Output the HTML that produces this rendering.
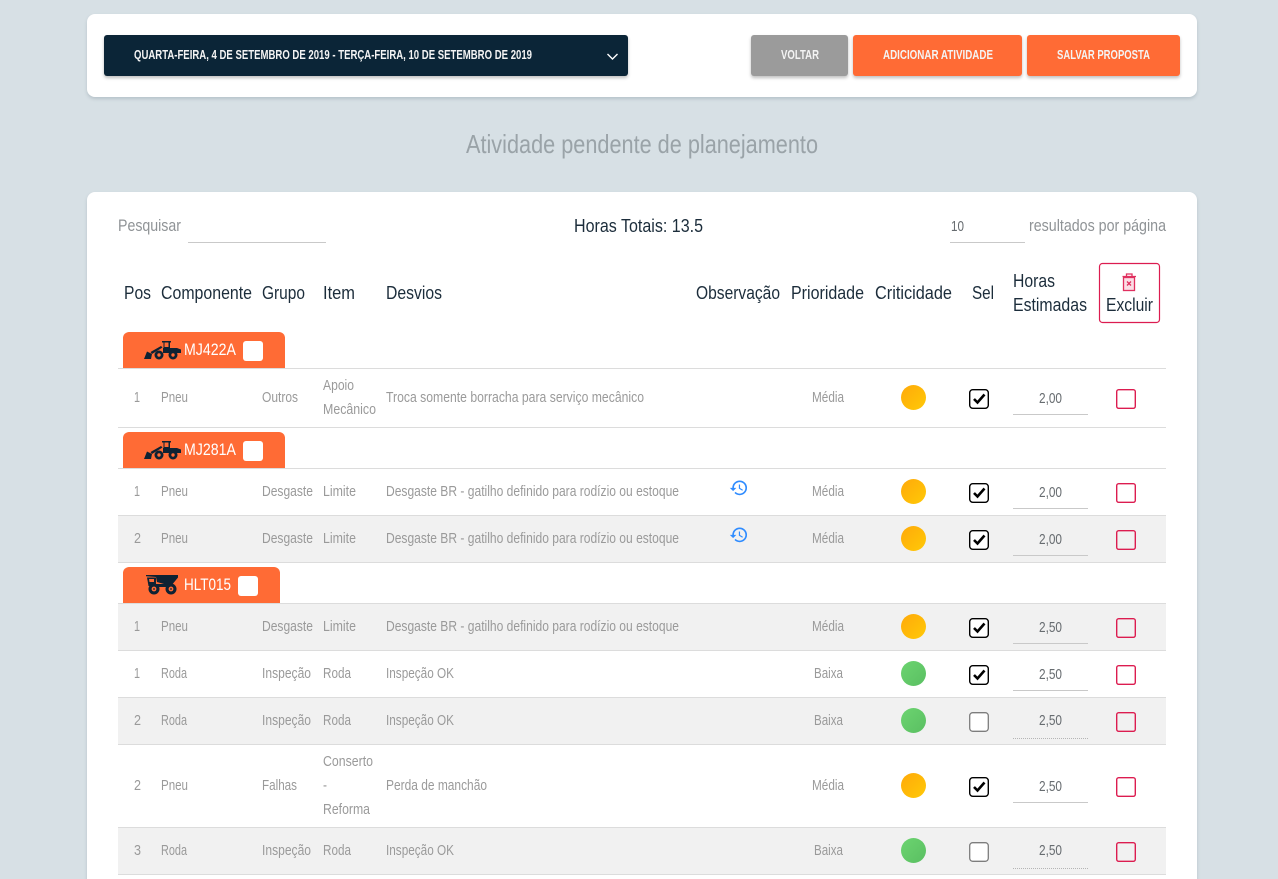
<!DOCTYPE html>
<html lang="pt"><head><meta charset="utf-8"><title>Atividade pendente de planejamento</title>
<style>
html,body{margin:0;padding:0;width:1278px;height:879px;overflow:hidden;background:#d7e0e5;font-family:"Liberation Sans",sans-serif}
#w{position:relative;width:1278px;height:879px;overflow:hidden}
.p{position:absolute;background:#fff;border-radius:8px;left:87px;width:1110px;box-shadow:0 2px 3px rgba(90,110,125,.25)}
.b{position:absolute;top:35px;height:41px;border-radius:3px;box-shadow:0 2px 3px rgba(0,0,0,.25)}
svg{position:absolute;left:0;top:0}
text{font-family:"Liberation Sans",sans-serif}
.c{font-size:15px;fill:#9a9a9a}
.h{font-size:18px;fill:#1c2d3b}
.g{font-size:17px;fill:#8f9396}
.n{font-size:15px;fill:#676c70}
.w{font-size:13px;font-weight:bold;fill:#f4f4f4}
.m{font-size:17px;fill:#fff}
.k{fill:#fff;stroke:#000;stroke-width:1.4}
.u{fill:none;stroke:#7d7d7d;stroke-width:1.3}
.r{fill:none;stroke:#dc1c50;stroke-width:1.4}
.ck{fill:none;stroke:#000;stroke-width:2.6}
.l{stroke:#dcdcdc;stroke-width:1}
.d{stroke:#c9c9c9;stroke-width:1}
.dd{stroke:#b5b5b5;stroke-width:1;stroke-dasharray:1 1}
</style></head><body><div id="w">
<div class="p" style="top:14px;height:83px"></div>
<div class="p" style="top:192px;height:700px"></div>
<div class="b" style="left:104px;width:524px;background:#0b2537"></div>
<div class="b" style="left:751px;width:97px;background:#9b9b9b"></div>
<div class="b" style="left:853px;width:169px;background:#ff6b35"></div>
<div class="b" style="left:1027px;width:153px;background:#ff6b35"></div>
<svg width="1278" height="879" viewBox="0 0 1278 879" xmlns="http://www.w3.org/2000/svg">
<defs>
<linearGradient id="o" x1="0" y1="0" x2="1" y2="1"><stop offset="0" stop-color="#ffa90a"/><stop offset="1" stop-color="#ffc907"/></linearGradient>
<linearGradient id="gr" x1="0" y1="0" x2="1" y2="1"><stop offset="0" stop-color="#6cd470"/><stop offset="1" stop-color="#5abf62"/></linearGradient>
<path id="hist" fill="#2f8cff" d="M13 3a9 9 0 0 0-9 9H1l3.89 3.89.07.14L9 12H6c0-3.87 3.13-7 7-7s7 3.13 7 7-3.13 7-7 7c-1.93 0-3.68-.79-4.94-2.06l-1.42 1.42A8.954 8.954 0 0 0 13 21a9 9 0 0 0 0-18zm-1 5v5l4.28 2.54.72-1.21-3.5-2.08V8H12z"/>
<g id="loader" fill="#0e2233">
<path d="M0 18 L3 10.500 L8 13 L7 18 Z"/>
<path d="M6.500 11 L17 5 L18.500 6.500 L8 13 Z"/>
<path d="M18 0 H27 V1.500 H26 V7 H33 L37 8.500 V12 H19 V7 H19.500 V1.500 H18 Z"/>
<rect x="20.500" y="1.500" width="4" height="4.500" fill="#ff6b35"/>
<circle cx="15" cy="14" r="4.500"/><circle cx="29" cy="14" r="4.500"/>
<circle cx="15" cy="14" r="1.700" fill="#ff6b35"/><circle cx="29" cy="14" r="1.700" fill="#ff6b35"/>
</g>
<g id="truck" fill="#0e2233">
<path d="M0 0 L32 0 L32 2.500 L25 11 L11 7 L10 2 L0 1.200 Z"/>
<path d="M1 2.500 H10 V11 H2.500 Z"/>
<rect x="8" y="9" width="17" height="3"/>
<path d="M3 4 H8 V7 H3.500 Z" fill="#ff6b35"/>
<circle cx="8" cy="14" r="5.500"/><circle cx="25" cy="14" r="5.500"/>
<circle cx="8" cy="14" r="2.400" fill="#ff6b35"/><circle cx="25" cy="14" r="2.400" fill="#ff6b35"/>
<circle cx="8" cy="14" r=".9"/><circle cx="25" cy="14" r=".9"/>
</g>
</defs>

<!-- top bar -->
<text class="w" x="134" y="59" textLength="398" lengthAdjust="spacingAndGlyphs">QUARTA-FEIRA, 4 DE SETEMBRO DE 2019 - TERÇA-FEIRA, 10 DE SETEMBRO DE 2019</text>
<path d="M607.500 54 L612.500 59 L617.500 54" fill="none" stroke="#fff" stroke-width="1.400"/>
<text class="w" x="781" y="59" textLength="38" lengthAdjust="spacingAndGlyphs">VOLTAR</text>
<text class="w" x="883" y="59" textLength="110" lengthAdjust="spacingAndGlyphs">ADICIONAR ATIVIDADE</text>
<text class="w" x="1057" y="59" textLength="93" lengthAdjust="spacingAndGlyphs">SALVAR PROPOSTA</text>

<text x="466" y="153" font-size="26" fill="#9aa3a8" textLength="352" lengthAdjust="spacingAndGlyphs">Atividade pendente de planejamento</text>

<!-- toolbar -->
<text class="g" x="118" y="231" textLength="63" lengthAdjust="spacingAndGlyphs">Pesquisar</text>
<line x1="188" y1="242.500" x2="326" y2="242.500" class="d"/>
<text class="h" x="574" y="232" textLength="129" lengthAdjust="spacingAndGlyphs">Horas Totais: 13.5</text>
<text class="n" x="951" y="231" textLength="13" lengthAdjust="spacingAndGlyphs">10</text>
<line x1="950" y1="242.500" x2="1025" y2="242.500" class="d"/>
<text class="g" x="1029" y="231" textLength="137" lengthAdjust="spacingAndGlyphs">resultados por página</text>

<!-- header -->
<text class="h" x="124" y="299" textLength="27" lengthAdjust="spacingAndGlyphs">Pos</text>
<text class="h" x="161" y="299" textLength="91" lengthAdjust="spacingAndGlyphs">Componente</text>
<text class="h" x="262" y="299" textLength="43" lengthAdjust="spacingAndGlyphs">Grupo</text>
<text class="h" x="323" y="299" textLength="32" lengthAdjust="spacingAndGlyphs">Item</text>
<text class="h" x="386" y="299" textLength="56" lengthAdjust="spacingAndGlyphs">Desvios</text>
<text class="h" x="696" y="299" textLength="84" lengthAdjust="spacingAndGlyphs">Observação</text>
<text class="h" x="791" y="299" textLength="73" lengthAdjust="spacingAndGlyphs">Prioridade</text>
<text class="h" x="875" y="299" textLength="77" lengthAdjust="spacingAndGlyphs">Criticidade</text>
<text class="h" x="972" y="299" textLength="22" lengthAdjust="spacingAndGlyphs">Sel</text>
<text class="h" x="1013" y="287" textLength="42" lengthAdjust="spacingAndGlyphs">Horas</text>
<text class="h" x="1013" y="311" textLength="74" lengthAdjust="spacingAndGlyphs">Estimadas</text>
<rect x="1099.500" y="263.500" width="60" height="59" rx="3" fill="#fff" stroke="#dc1c50" stroke-width="1.200"/>
<text class="h" x="1106" y="311" textLength="47" lengthAdjust="spacingAndGlyphs">Excluir</text>
<g fill="none" stroke="#e0305f" stroke-width="1.300">
<path d="M1122.500 276.500 H1136 M1126.500 276.500 V274 H1132 V276.500"/>
<rect x="1123.500" y="277.500" width="11" height="13" fill="#fbdde5"/>
<path d="M1127 281.500 L1131 285.500 M1131 281.500 L1127 285.500"/>
</g>

<!-- row backgrounds -->
<g fill="#f1f1f1">
<rect x="118" y="516" width="1048" height="46"/>
<rect x="118" y="604" width="1048" height="46"/>
<rect x="118" y="698" width="1048" height="46"/>
<rect x="118" y="828" width="1048" height="46"/>
</g>
<g class="l">
<line x1="118" x2="1166" y1="368.500" y2="368.500"/>
<line x1="118" x2="1166" y1="427.500" y2="427.500"/>
<line x1="118" x2="1166" y1="468.500" y2="468.500"/>
<line x1="118" x2="1166" y1="515.500" y2="515.500"/>
<line x1="118" x2="1166" y1="562.500" y2="562.500"/>
<line x1="118" x2="1166" y1="603.500" y2="603.500"/>
<line x1="118" x2="1166" y1="650.500" y2="650.500"/>
<line x1="118" x2="1166" y1="697.500" y2="697.500"/>
<line x1="118" x2="1166" y1="744.500" y2="744.500"/>
<line x1="118" x2="1166" y1="827.500" y2="827.500"/>
<line x1="118" x2="1166" y1="874.500" y2="874.500"/>
</g>

<!-- group tabs -->
<path d="M123 368 V338 a6 6 0 0 1 6-6 H279 a6 6 0 0 1 6 6 V368 Z" fill="#ff6b35"/>
<use href="#loader" x="144" y="341"/>
<text class="m" x="184" y="355" textLength="52" lengthAdjust="spacingAndGlyphs">MJ422A</text>
<rect x="243" y="341" width="20" height="20" rx="3" fill="#fff"/>

<path d="M123 468 V438 a6 6 0 0 1 6-6 H279 a6 6 0 0 1 6 6 V468 Z" fill="#ff6b35"/>
<use href="#loader" x="144" y="441"/>
<text class="m" x="184" y="455" textLength="52" lengthAdjust="spacingAndGlyphs">MJ281A</text>
<rect x="243" y="441" width="20" height="20" rx="3" fill="#fff"/>

<path d="M123 603 V573 a6 6 0 0 1 6-6 H274 a6 6 0 0 1 6 6 V603 Z" fill="#ff6b35"/>
<use href="#truck" x="146" y="575"/>
<text class="m" x="184" y="590" textLength="47" lengthAdjust="spacingAndGlyphs">HLT015</text>
<rect x="238" y="576" width="20" height="20" rx="3" fill="#fff"/>

<!-- row 1 -->
<g class="c">
<text x="134" y="402" textLength="6" lengthAdjust="spacingAndGlyphs">1</text>
<text x="161" y="402" textLength="27" lengthAdjust="spacingAndGlyphs">Pneu</text>
<text x="262" y="402" textLength="36" lengthAdjust="spacingAndGlyphs">Outros</text>
<text x="323" y="390" textLength="31" lengthAdjust="spacingAndGlyphs">Apoio</text>
<text x="323" y="414" textLength="53" lengthAdjust="spacingAndGlyphs">Mecânico</text>
<text x="386" y="402" textLength="258" lengthAdjust="spacingAndGlyphs">Troca somente borracha para serviço mecânico</text>
<text x="812" y="402" textLength="32" lengthAdjust="spacingAndGlyphs">Média</text>
</g>
<circle cx="913.500" cy="397.500" r="12.500" fill="url(#o)"/>
<rect class="k" x="969.700" y="389.700" width="18.600" height="18.600" rx="3"/><path class="ck" d="M974 399 L977.500 402.500 L984.500 394.500"/>
<text class="n" x="1039" y="403" textLength="23" lengthAdjust="spacingAndGlyphs">2,00</text>
<line x1="1013" x2="1088" y1="414.500" y2="414.500" class="d"/>
<rect class="r" x="1116.700" y="389.700" width="18.600" height="18.600" rx="2"/>

<!-- MJ281A rows -->
<g class="c">
<text x="134" y="496" textLength="6" lengthAdjust="spacingAndGlyphs">1</text>
<text x="161" y="496" textLength="27" lengthAdjust="spacingAndGlyphs">Pneu</text>
<text x="262" y="496" textLength="51" lengthAdjust="spacingAndGlyphs">Desgaste</text>
<text x="323" y="496" textLength="33" lengthAdjust="spacingAndGlyphs">Limite</text>
<text x="386" y="496" textLength="293" lengthAdjust="spacingAndGlyphs">Desgaste BR - gatilho definido para rodízio ou estoque</text>
<text x="812" y="496" textLength="32" lengthAdjust="spacingAndGlyphs">Média</text>
</g>
<use href="#hist" transform="translate(729 478) scale(.82)"/>
<circle cx="913.500" cy="491.500" r="12.500" fill="url(#o)"/>
<rect class="k" x="969.700" y="483.700" width="18.600" height="18.600" rx="3"/><path class="ck" d="M974 493 L977.500 496.500 L984.500 488.500"/>
<text class="n" x="1039" y="497" textLength="23" lengthAdjust="spacingAndGlyphs">2,00</text>
<line x1="1013" x2="1088" y1="508.500" y2="508.500" class="d"/>
<rect class="r" x="1116.700" y="483.700" width="18.600" height="18.600" rx="2"/>

<g class="c">
<text x="134" y="543" textLength="7" lengthAdjust="spacingAndGlyphs">2</text>
<text x="161" y="543" textLength="27" lengthAdjust="spacingAndGlyphs">Pneu</text>
<text x="262" y="543" textLength="51" lengthAdjust="spacingAndGlyphs">Desgaste</text>
<text x="323" y="543" textLength="33" lengthAdjust="spacingAndGlyphs">Limite</text>
<text x="386" y="543" textLength="293" lengthAdjust="spacingAndGlyphs">Desgaste BR - gatilho definido para rodízio ou estoque</text>
<text x="812" y="543" textLength="32" lengthAdjust="spacingAndGlyphs">Média</text>
</g>
<use href="#hist" transform="translate(729 525) scale(.82)"/>
<circle cx="913.500" cy="538.500" r="12.500" fill="url(#o)"/>
<rect class="k" x="969.700" y="530.700" width="18.600" height="18.600" rx="3"/><path class="ck" d="M974 540 L977.500 543.500 L984.500 535.500"/>
<text class="n" x="1039" y="544" textLength="23" lengthAdjust="spacingAndGlyphs">2,00</text>
<line x1="1013" x2="1088" y1="555.500" y2="555.500" class="d"/>
<rect class="r" x="1116.700" y="530.700" width="18.600" height="18.600" rx="2"/>

<!-- HLT015 rows -->
<g class="c">
<text x="134" y="631" textLength="6" lengthAdjust="spacingAndGlyphs">1</text>
<text x="161" y="631" textLength="27" lengthAdjust="spacingAndGlyphs">Pneu</text>
<text x="262" y="631" textLength="51" lengthAdjust="spacingAndGlyphs">Desgaste</text>
<text x="323" y="631" textLength="33" lengthAdjust="spacingAndGlyphs">Limite</text>
<text x="386" y="631" textLength="293" lengthAdjust="spacingAndGlyphs">Desgaste BR - gatilho definido para rodízio ou estoque</text>
<text x="812" y="631" textLength="32" lengthAdjust="spacingAndGlyphs">Média</text>
</g>
<circle cx="913.500" cy="626.500" r="12.500" fill="url(#o)"/>
<rect class="k" x="969.700" y="618.700" width="18.600" height="18.600" rx="3"/><path class="ck" d="M974 628 L977.500 631.500 L984.500 623.500"/>
<text class="n" x="1039" y="632" textLength="23" lengthAdjust="spacingAndGlyphs">2,50</text>
<line x1="1013" x2="1088" y1="643.500" y2="643.500" class="d"/>
<rect class="r" x="1116.700" y="618.700" width="18.600" height="18.600" rx="2"/>

<g class="c">
<text x="134" y="678" textLength="6" lengthAdjust="spacingAndGlyphs">1</text>
<text x="161" y="678" textLength="26" lengthAdjust="spacingAndGlyphs">Roda</text>
<text x="262" y="678" textLength="49" lengthAdjust="spacingAndGlyphs">Inspeção</text>
<text x="323" y="678" textLength="28" lengthAdjust="spacingAndGlyphs">Roda</text>
<text x="386" y="678" textLength="68" lengthAdjust="spacingAndGlyphs">Inspeção OK</text>
<text x="814" y="678" textLength="29" lengthAdjust="spacingAndGlyphs">Baixa</text>
</g>
<circle cx="913.500" cy="673.500" r="12.500" fill="url(#gr)"/>
<rect class="k" x="969.700" y="665.700" width="18.600" height="18.600" rx="3"/><path class="ck" d="M974 675 L977.500 678.500 L984.500 670.500"/>
<text class="n" x="1039" y="679" textLength="23" lengthAdjust="spacingAndGlyphs">2,50</text>
<line x1="1013" x2="1088" y1="690.500" y2="690.500" class="d"/>
<rect class="r" x="1116.700" y="665.700" width="18.600" height="18.600" rx="2"/>

<g class="c">
<text x="134" y="725" textLength="7" lengthAdjust="spacingAndGlyphs">2</text>
<text x="161" y="725" textLength="26" lengthAdjust="spacingAndGlyphs">Roda</text>
<text x="262" y="725" textLength="49" lengthAdjust="spacingAndGlyphs">Inspeção</text>
<text x="323" y="725" textLength="28" lengthAdjust="spacingAndGlyphs">Roda</text>
<text x="386" y="725" textLength="68" lengthAdjust="spacingAndGlyphs">Inspeção OK</text>
<text x="814" y="725" textLength="29" lengthAdjust="spacingAndGlyphs">Baixa</text>
</g>
<circle cx="913.500" cy="720.500" r="12.500" fill="url(#gr)"/>
<rect class="u" x="969.700" y="712.700" width="18.600" height="18.600" rx="3" style="fill:#fff"/>
<text class="n" x="1039" y="725" textLength="23" lengthAdjust="spacingAndGlyphs">2,50</text>
<line x1="1013" x2="1088" y1="738.500" y2="738.500" class="dd"/>
<rect class="r" x="1116.700" y="712.700" width="18.600" height="18.600" rx="2"/>

<g class="c">
<text x="134" y="790" textLength="7" lengthAdjust="spacingAndGlyphs">2</text>
<text x="161" y="790" textLength="27" lengthAdjust="spacingAndGlyphs">Pneu</text>
<text x="262" y="790" textLength="35" lengthAdjust="spacingAndGlyphs">Falhas</text>
<text x="323" y="766" textLength="50" lengthAdjust="spacingAndGlyphs">Conserto</text>
<text x="323" y="790" textLength="4" lengthAdjust="spacingAndGlyphs">-</text>
<text x="323" y="814" textLength="47" lengthAdjust="spacingAndGlyphs">Reforma</text>
<text x="386" y="790" textLength="101" lengthAdjust="spacingAndGlyphs">Perda de manchão</text>
<text x="812" y="790" textLength="32" lengthAdjust="spacingAndGlyphs">Média</text>
</g>
<circle cx="913.500" cy="785.500" r="12.500" fill="url(#o)"/>
<rect class="k" x="969.700" y="777.700" width="18.600" height="18.600" rx="3"/><path class="ck" d="M974 787 L977.500 790.500 L984.500 782.500"/>
<text class="n" x="1039" y="791" textLength="23" lengthAdjust="spacingAndGlyphs">2,50</text>
<line x1="1013" x2="1088" y1="802.500" y2="802.500" class="d"/>
<rect class="r" x="1116.700" y="777.700" width="18.600" height="18.600" rx="2"/>

<g class="c">
<text x="134" y="855" textLength="7" lengthAdjust="spacingAndGlyphs">3</text>
<text x="161" y="855" textLength="26" lengthAdjust="spacingAndGlyphs">Roda</text>
<text x="262" y="855" textLength="49" lengthAdjust="spacingAndGlyphs">Inspeção</text>
<text x="323" y="855" textLength="28" lengthAdjust="spacingAndGlyphs">Roda</text>
<text x="386" y="855" textLength="68" lengthAdjust="spacingAndGlyphs">Inspeção OK</text>
<text x="814" y="855" textLength="29" lengthAdjust="spacingAndGlyphs">Baixa</text>
</g>
<circle cx="913.500" cy="850.500" r="12.500" fill="url(#gr)"/>
<rect class="u" x="969.700" y="842.700" width="18.600" height="18.600" rx="3" style="fill:#fff"/>
<text class="n" x="1039" y="855" textLength="23" lengthAdjust="spacingAndGlyphs">2,50</text>
<line x1="1013" x2="1088" y1="868.500" y2="868.500" class="dd"/>
<rect class="r" x="1116.700" y="842.700" width="18.600" height="18.600" rx="2"/>
</svg>
</div></body></html>
